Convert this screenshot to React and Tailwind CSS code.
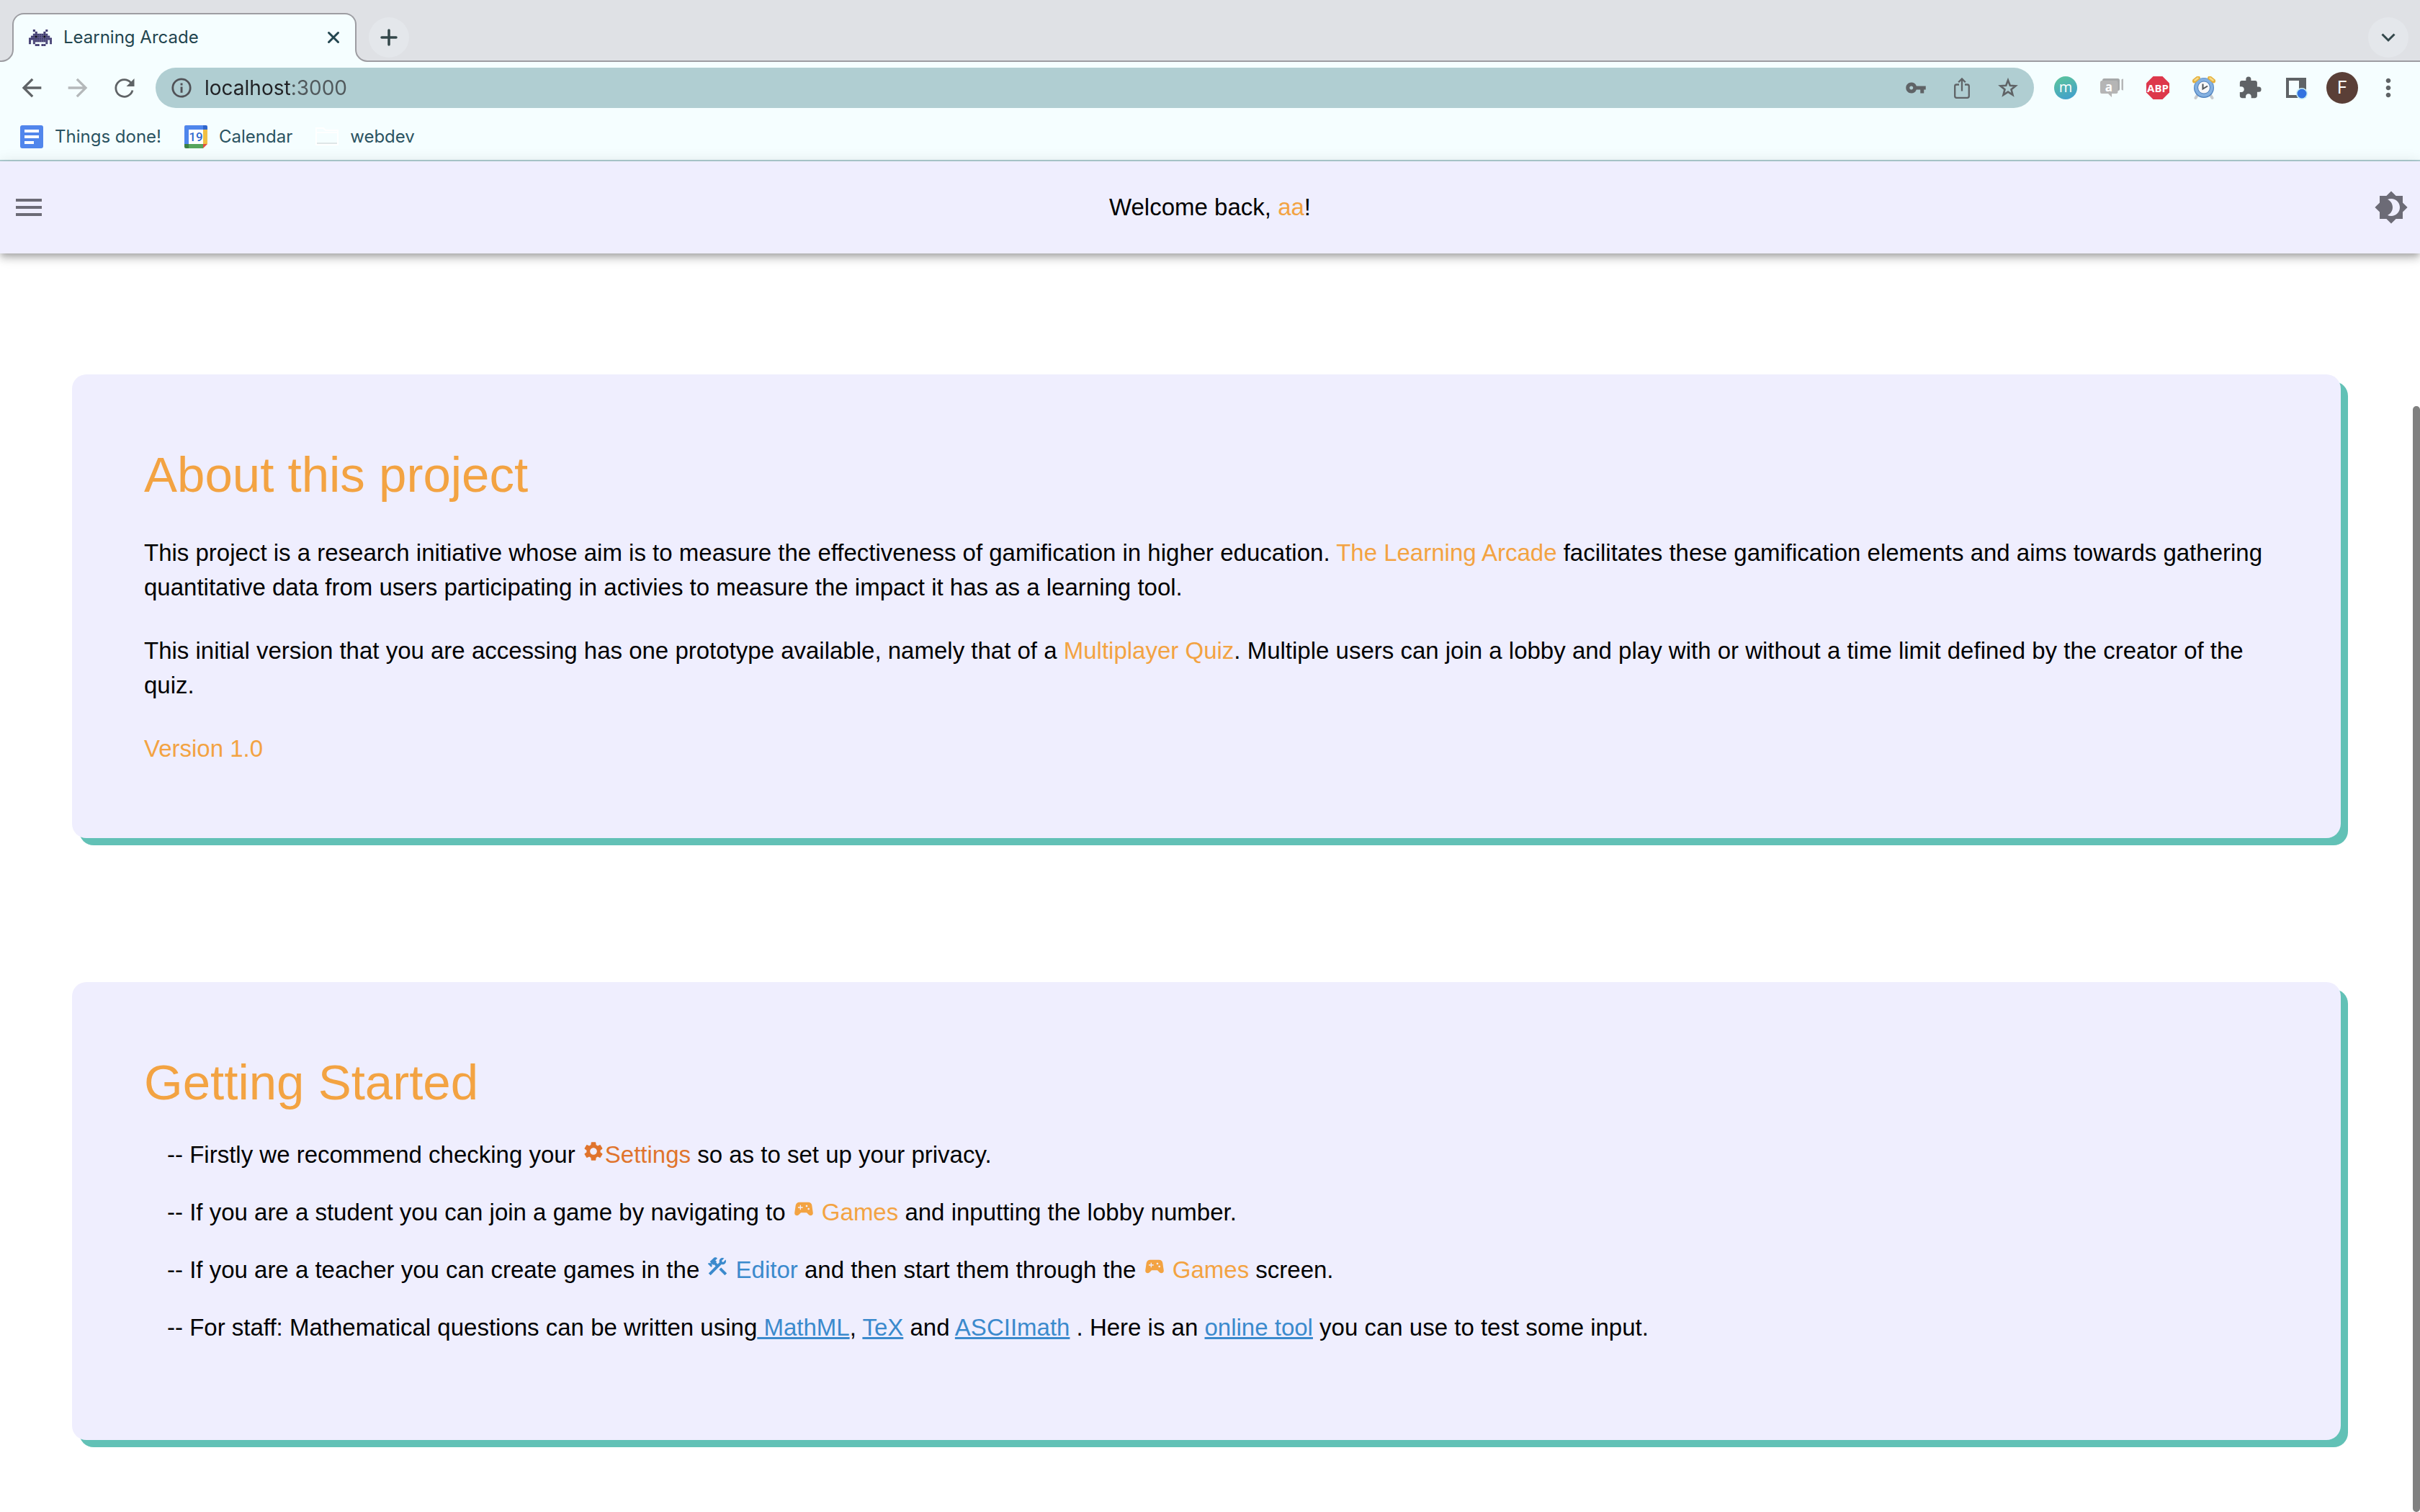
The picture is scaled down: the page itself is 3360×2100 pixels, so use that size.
import React from "react";
import {
  MdArrowBack,
  MdArrowForward,
  MdBrightness4,
  MdConstruction,
  MdExtension,
  MdMenu,
  MdMoreVert,
  MdSettings,
  MdSportsEsports,
  MdVpnKey,
} from "react-icons/md";

const INVADER = [
  "..#.....#..",
  "...#...#...",
  "..#######..",
  ".##o###o##.",
  "###########",
  "#.#######.#",
  "#.#.....#.#",
  "...##.##...",
];

function InvaderIcon() {
  return (
    <svg viewBox="0 0 11 8" className="h-[23px] w-8 shrink-0" preserveAspectRatio="none" aria-hidden="true">
      {INVADER.flatMap((row, y) =>
        [...row].map((c, x) =>
          c === "." ? null : (
            <rect key={`${x}-${y}`} x={x} y={y} width="1.05" height="1.05" fill={c === "o" ? "#0b0b18" : "#443f73"} />
          )
        )
      )}
    </svg>
  );
}

function TabFoot({ flip }) {
  return (
    <svg viewBox="0 0 19 18" className={flip ? "relative -ml-0.5 h-[18px] w-[19px] shrink-0 -scale-x-100" : "relative -mr-0.5 h-[18px] w-[19px] shrink-0"} aria-hidden="true">
      <path d="M0 17H2A16 16 0 0 0 18 1V0H19V18H0Z" fill="#f5feff" />
      <path d="M0 17H2A16 16 0 0 0 18 1V0" fill="none" stroke="#9d9da2" strokeWidth="2" />
    </svg>
  );
}

function TabStrip() {
  return (
    <div className="flex h-[86px] items-end bg-[#dfe1e5]">
      <TabFoot />
      <div className="flex h-[68px] w-[478px] items-center rounded-t-[16px] border-2 border-b-0 border-[#9d9da2] bg-[#f5feff] pb-0.5 pl-[21px] pr-5">
        <InvaderIcon />
        <span className="ml-4 flex-1 text-2xl text-[#22454f]">Learning Arcade</span>
        <button aria-label="Close tab" className="grid size-5 place-items-center">
          <svg viewBox="0 0 20 20" className="size-5" fill="none" stroke="#22454f" strokeWidth="3" strokeLinecap="round">
            <path d="M3.500 3.500 16.500 16.500M16.500 3.500 3.500 16.500" />
          </svg>
        </button>
      </div>
      <TabFoot flip />
      <div className="flex h-full flex-1 items-end justify-between border-b-2 border-[#9d9da2] pb-1 pr-4">
        <button aria-label="New tab" className="grid size-14 place-items-center rounded-full bg-[#e4e7eb]">
          <svg viewBox="0 0 24 24" className="size-6" fill="none" stroke="#33474a" strokeWidth="3.500" strokeLinecap="round">
            <path d="M12 2V22M2 12H22" />
          </svg>
        </button>
        <button aria-label="Search tabs" className="grid size-14 place-items-center rounded-full bg-[#e4e7eb]">
          <svg viewBox="0 0 20 20" className="size-5" fill="none" stroke="#33474a" strokeWidth="3">
            <path d="M1.500 5.500 10 14 18.500 5.500" />
          </svg>
        </button>
      </div>
    </div>
  );
}

function IconButton({ label, children }) {
  return (
    <button aria-label={label} className="grid h-14 w-16 shrink-0 place-items-center text-[#5f6366]">
      {children}
    </button>
  );
}

function ReloadIcon() {
  return (
    <svg viewBox="0 0 32 32" className="size-8" aria-hidden="true">
      <path d="M28 19.500A11.800 11.800 0 1 1 25.600 8.800" fill="none" stroke="currentColor" strokeWidth="2.800" />
      <path d="M30.500 3V14H19.500Z" fill="currentColor" />
    </svg>
  );
}

function InfoIcon() {
  return (
    <svg viewBox="0 0 28 28" className="size-7 shrink-0" aria-hidden="true">
      <circle cx="14" cy="14" r="12.200" fill="none" stroke="#515257" strokeWidth="2.800" />
      <rect x="12.600" y="7.500" width="2.900" height="3" fill="#515257" />
      <rect x="12.600" y="12.500" width="2.900" height="8.300" fill="#515257" />
    </svg>
  );
}

function ShareIcon() {
  return (
    <svg viewBox="0 0 32 32" className="size-8" fill="none" stroke="currentColor" strokeWidth="2.300" aria-hidden="true">
      <path d="M12 11.500H8.500Q6.200 11.500 6.200 13.800V27.500Q6.200 29.800 8.500 29.800H23.500Q25.800 29.800 25.800 27.500V13.800Q25.800 11.500 23.500 11.500H20" />
      <path d="M16 20.500V3.500M11.200 8.300 16 3.500 20.800 8.300" />
    </svg>
  );
}

function StarIcon() {
  return (
    <svg viewBox="0 0 32 32" className="size-8" aria-hidden="true">
      <path d="M16 5.500 18.800 12.800 26.500 13.300 20.500 18.200 22.500 25.800 16 21.600 9.500 25.800 11.500 18.200 5.500 13.300 13.200 12.800Z" fill="none" stroke="currentColor" strokeWidth="2.600" />
    </svg>
  );
}

function MoteIcon() {
  return (
    <svg viewBox="0 0 32 32" className="size-8" aria-hidden="true">
      <defs>
        <linearGradient id="mote" x1="0.3" y1="0" x2="0.7" y2="1">
          <stop offset="0.1" stopColor="#58c0a2" />
          <stop offset="0.9" stopColor="#44a3c8" />
        </linearGradient>
      </defs>
      <circle cx="16" cy="16" r="16" fill="url(#mote)" />
      <text x="16" y="22" textAnchor="middle" fill="#fff" fontSize="20" fontFamily="Open Sans, sans-serif">m</text>
    </svg>
  );
}

function ChatIcon() {
  return (
    <svg viewBox="0 0 32 32" className="size-8" aria-hidden="true">
      <path d="M29.500 4.500Q30.500 3.500 32 3.500V19.500Q30.500 19.500 29.500 18.500Z" fill="#b5b7b8" />
      <rect x="3" y="3" width="24" height="17" rx="2.500" fill="#a6a8a9" />
      <path d="M2 6H22Q24.500 6 24.500 8.500V21.500Q24.500 24 22 24H16V29L11 24H2Q0 24 0 21.500V8.500Q0 6 2 6Z" fill="#b5b5b5" />
      <text x="12" y="20.500" textAnchor="middle" fill="#fff" fontSize="17" fontWeight="700" fontFamily="Open Sans, sans-serif">a</text>
    </svg>
  );
}

function AbpIcon() {
  return (
    <svg viewBox="0 0 32 32" className="size-8" aria-hidden="true">
      <path d="M9.500 0H22.500L32 9.500V22.500L22.500 32H9.500L0 22.500V9.500Z" fill="#dd384b" />
      <text x="16" y="21.500" textAnchor="middle" fill="#fff" fontSize="15" fontWeight="700" fontFamily="Open Sans, sans-serif">ABP</text>
    </svg>
  );
}

function ClockIcon() {
  return (
    <svg viewBox="0 0 32 32" className="size-8" aria-hidden="true">
      <path d="M7 26 4.500 30M25 26 27.500 30" stroke="#c9cbcd" strokeWidth="4" strokeLinecap="round" />
      <circle cx="16" cy="16" r="14" fill="#4f82bf" />
      <circle cx="16" cy="15.500" r="13" fill="#83b0e0" />
      <circle cx="16" cy="15.500" r="9" fill="#4d7db8" />
      <circle cx="16" cy="15.500" r="8" fill="#f7f8f9" />
      <path d="M2.500 6.500 8 2" stroke="#e6b13c" strokeWidth="5.500" strokeLinecap="round" />
      <path d="M24 2 29.500 6.500" stroke="#e6b13c" strokeWidth="5.500" strokeLinecap="round" />
      <path d="M3.500 5.500 7.500 2.500M24.500 2.500 28.500 5.500" stroke="#f6da8a" strokeWidth="2.500" strokeLinecap="round" />
      <path d="M14.500 10.500V17.500L21 13.500" fill="none" stroke="#4f5559" strokeWidth="2" />
    </svg>
  );
}

function SidePanelIcon() {
  return (
    <svg viewBox="0 0 32 32" className="size-8" aria-hidden="true">
      <path d="M2 2H30V30H2ZM6 6V26H20V6Z" fill="#5f6366" fillRule="evenodd" />
      <circle cx="24" cy="24" r="8" fill="#c8eef5" />
      <circle cx="24" cy="24" r="6.500" fill="#3373e0" />
    </svg>
  );
}

function Toolbar() {
  return (
    <div className="flex h-[72px] items-center bg-[#f5feff] pl-3 pr-3">
      <IconButton label="Back"><MdArrowBack className="size-10" /></IconButton>
      <button aria-label="Forward" className="grid h-14 w-16 shrink-0 place-items-center text-[#b4b8ba]">
        <MdArrowForward className="size-10" />
      </button>
      <IconButton label="Reload"><ReloadIcon /></IconButton>
      <div className="ml-3 mr-3 flex h-14 flex-1 items-center rounded-full bg-[#b0ced2] pl-[22px] pr-1">
        <InfoIcon />
        <input
          aria-label="Address"
          defaultValue="localhost:3000"
          className="ml-[18px] h-10 min-w-0 flex-1 bg-[linear-gradient(to_right,#202124_121px,#50585b_121px)] bg-clip-text text-[28px] text-transparent outline-none"
        />
        <IconButton label="Passwords"><MdVpnKey className="size-[30px]" /></IconButton>
        <IconButton label="Share"><ShareIcon /></IconButton>
        <IconButton label="Bookmark"><StarIcon /></IconButton>
      </div>
      <IconButton label="Mote"><MoteIcon /></IconButton>
      <IconButton label="Chat"><ChatIcon /></IconButton>
      <IconButton label="Adblock Plus"><AbpIcon /></IconButton>
      <IconButton label="Timer"><ClockIcon /></IconButton>
      <IconButton label="Extensions"><MdExtension className="size-[34px]" /></IconButton>
      <IconButton label="Side panel"><SidePanelIcon /></IconButton>
      <IconButton label="Profile">
        <span className="grid size-11 place-items-center rounded-full bg-[#5a3f37] text-2xl text-white">F</span>
      </IconButton>
      <IconButton label="Browser menu"><MdMoreVert className="size-10" /></IconButton>
    </div>
  );
}

function DocsIcon() {
  return (
    <svg viewBox="0 0 32 32" className="size-8" aria-hidden="true">
      <rect width="32" height="32" rx="3" fill="#5186ec" />
      <path d="M6 6H26V10H6ZM6 14H26V18H6ZM6 22H19V26H6Z" fill="#fff" />
    </svg>
  );
}

function CalendarIcon() {
  return (
    <svg viewBox="0 0 32 32" className="size-8" aria-hidden="true">
      <path d="M2 0H26V6H6V26H0V2Q0 0 2 0Z" fill="#4f86ec" />
      <path d="M26 0H30Q32 0 32 2V6H26Z" fill="#2f66cb" />
      <path d="M26 6H32V26H26Z" fill="#f1bf43" />
      <path d="M6 26H26V32H6Z" fill="#58a55c" />
      <path d="M0 26H6V32H2Q0 32 0 30Z" fill="#3c8043" />
      <path d="M26 26H32L26 32Z" fill="#e2513f" />
      <path d="M6 6H26V26H6Z" fill="#fff" />
      <text x="16" y="22" textAnchor="middle" fill="#3168cf" fontSize="17" fontWeight="500" fontFamily="Roboto, sans-serif">19</text>
    </svg>
  );
}

function FolderIcon() {
  return (
    <svg viewBox="0 0 32 32" className="size-8" fill="none" aria-hidden="true">
      <path d="M1 27V4H11L14 7H31V27Z M1 10H31" stroke="#fff" strokeWidth="2" />
      <path d="M2 25H30" stroke="#dfe6e7" strokeWidth="2" />
    </svg>
  );
}

function Bookmark({ icon, children }) {
  return (
    <a href="#" className="flex items-center gap-4">
      {icon}
      {children}
    </a>
  );
}

function BookmarksBar() {
  return (
    <nav aria-label="Bookmarks" className="flex h-[66px] items-center gap-8 border-b-2 border-[#b0ced2] bg-[#f5feff] pl-7 text-2xl text-[#2a5361]">
      <Bookmark icon={<DocsIcon />}>Things done!</Bookmark>
      <Bookmark icon={<CalendarIcon />}>Calendar</Bookmark>
      <Bookmark icon={<FolderIcon />}>webdev</Bookmark>
    </nav>
  );
}

function Card({ children }) {
  return (
    <section className="rounded-[20px] bg-[#efeefe] p-[100px] shadow-[10px_10px_0_0_#62c1b6]">{children}</section>
  );
}

const Accent = ({ children }) => <span className="text-[#f3a342]">{children}</span>;

const Link = ({ children }) => (
  <a href="#" className="text-[#3b8acd] underline">{children}</a>
);

const GamesLink = () => (
  <a href="#" className="text-[#f3a342]">
    <MdSportsEsports className="inline size-8 align-baseline" /> Games
  </a>
);

export default function App() {
  return (
    <div className="flex min-h-screen flex-col bg-white font-['Liberation_Sans',Arial,sans-serif] text-[33px] leading-[48px] text-black">
      <div className="font-[Inter,sans-serif]">
        <TabStrip />
        <Toolbar />
        <BookmarksBar />
      </div>

      <header className="relative flex h-32 items-center justify-between bg-[#efeefe] px-4 shadow-[0_4px_8px_-2px_rgba(0,0,0,0.2),0_8px_10px_0_rgba(0,0,0,0.14),0_2px_20px_0_rgba(0,0,0,0.12)]">
        <button aria-label="Open menu" className="text-[#6c6b76]"><MdMenu className="size-12" /></button>
        <p>Welcome back, <Accent>aa</Accent>!</p>
        <button aria-label="Toggle theme" className="text-[#6c6b76]"><MdBrightness4 className="size-12" /></button>
      </header>

      <div className="flex flex-1">
        <main className="flex flex-1 flex-col gap-[200px] px-[100px] pb-[100px] pt-[168px]">
          <Card>
            <h1 className="mb-11 text-[69px] leading-[80px] text-[#f3a342]">About this project</h1>
            <div className="flex flex-col gap-10">
              <p>
                This project is a research initiative whose aim is to measure the effectiveness of gamification in higher
                education. <Accent>The Learning Arcade</Accent> facilitates these gamification elements and aims towards
                gathering quantitative data from users participating in activies to measure the impact it has as a
                learning tool.
              </p>
              <p>
                This initial version that you are accessing has one prototype available, namely that of a{" "}
                <Accent>Multiplayer Quiz</Accent>. Multiple users can join a lobby and play with or without a time limit
                defined by the creator of the quiz.
              </p>
              <p><Accent>Version 1.0</Accent></p>
            </div>
          </Card>

          <Card>
            <h1 className="mb-9 text-[69px] leading-[80px] text-[#f3a342]">Getting Started</h1>
            <ul className="flex flex-col gap-8 pb-8 pl-8">
              <li>
                -- Firstly we recommend checking your{" "}
                <a href="#" className="text-[#e0742c]"><MdSettings className="inline size-8 align-baseline" />Settings</a>{" "}
                so as to set up your privacy.
              </li>
              <li>
                -- If you are a student you can join a game by navigating to <GamesLink /> and inputting the lobby number.
              </li>
              <li>
                -- If you are a teacher you can create games in the{" "}
                <a href="#" className="text-[#3b8acd]"><MdConstruction className="inline size-8 align-baseline" /> Editor</a>{" "}
                and then start them through the <GamesLink /> screen.
              </li>
              <li>
                -- For staff: Mathematical questions can be written using<Link> MathML</Link>, <Link>TeX</Link> and{" "}
                <Link>ASCIImath</Link> . Here is an <Link>online tool</Link> you can use to test some input.
              </li>
            </ul>
          </Card>
        </main>
        <div className="flex w-[10px] flex-col pt-[212px]" aria-hidden="true">
          <div className="flex-1 rounded-full bg-[#808080]" />
        </div>
      </div>
    </div>
  );
}
